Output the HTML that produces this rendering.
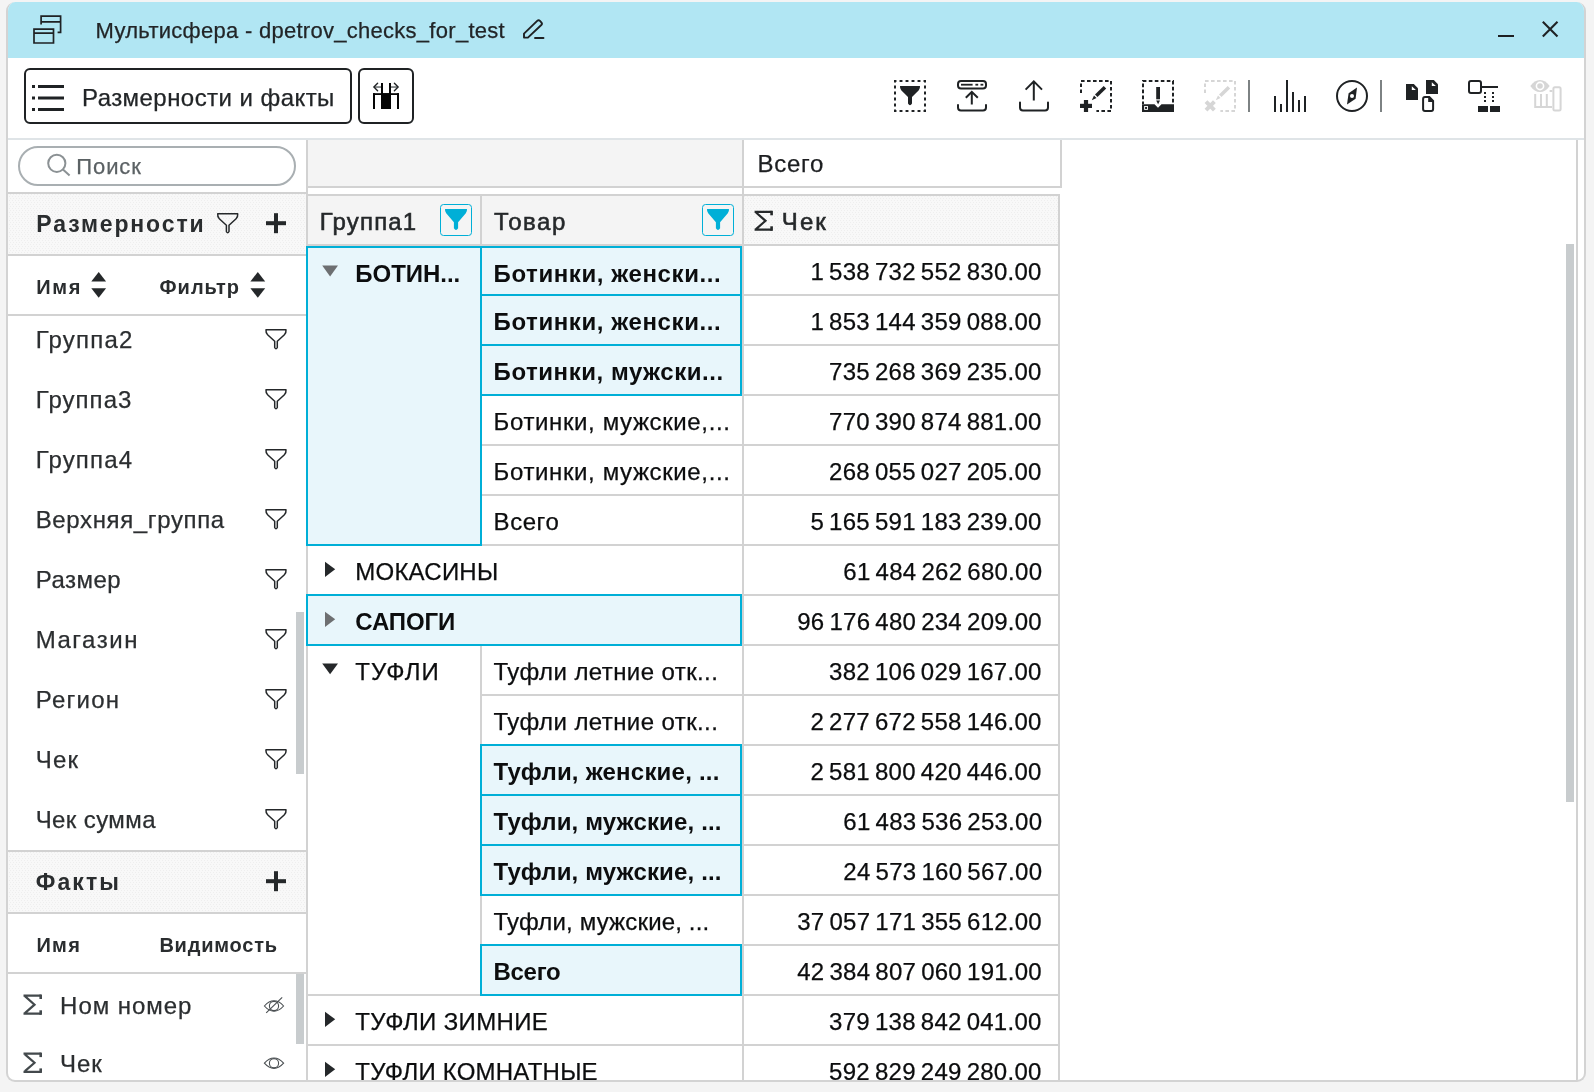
<!DOCTYPE html>
<html><head><meta charset="utf-8"><title>Мультисфера</title>
<style>
html,body{margin:0;padding:0;}
body{width:1594px;height:1092px;overflow:hidden;background:#f4f4f4;position:relative;font-family:"Liberation Sans", sans-serif;}
#win{position:absolute;left:6px;top:2px;width:1580px;height:1080px;box-sizing:border-box;border:2px solid #d3d3d3;border-top:0;border-radius:9px;background:#fff;overflow:hidden;}
#o{position:absolute;left:-8px;top:-2px;width:1594px;height:1092px;will-change:transform;}
#o div{position:absolute;}
#o span{position:absolute;white-space:pre;font-family:"Liberation Sans", sans-serif;}
#o svg{position:absolute;left:0;top:0;}
</style></head><body>
<div id="win"><div id="o">
<svg width="1594" height="1092" viewBox="0 0 1594 1092" shape-rendering="crispEdges">
<defs><pattern id="stp" width="3" height="4" patternUnits="userSpaceOnUse"><rect width="3" height="4" fill="#f8f8f8"/><rect x="0" y="0" width="1" height="1" fill="#eeeeee"/><rect x="1" y="2" width="1" height="1" fill="#eeeeee"/></pattern></defs>
<rect x="8" y="194" width="298" height="60" fill="url(#stp)"/>
<rect x="8" y="852" width="298" height="60" fill="url(#stp)"/>
<rect x="744" y="196" width="314" height="48" fill="url(#stp)"/>
</svg>
<div style="left:8px;top:2px;width:1576px;height:56px;background:#b1e6f3;"></div>
<div style="left:1498px;top:35px;width:16px;height:2px;background:#1d2022;"></div>
<div style="left:8px;top:138px;width:1576px;height:2px;background:#dfe4e7;"></div>
<div style="left:24px;top:68px;width:328px;height:56px;box-sizing:border-box;border:2px solid #1f2224;border-radius:6px;"></div>
<div style="left:358px;top:68px;width:56px;height:56px;box-sizing:border-box;border:2px solid #1f2224;border-radius:6px;"></div>
<div style="left:18px;top:146px;width:278px;height:40px;background:#fff;box-sizing:border-box;border:2px solid #a9afb2;border-radius:20px;"></div>
<div style="left:8px;top:192px;width:298px;height:2px;background:#d2d2d2;"></div>
<div style="left:8px;top:254px;width:298px;height:2px;background:#d2d2d2;"></div>
<div style="left:8px;top:314px;width:298px;height:2px;background:#d2d2d2;"></div>
<div style="left:8px;top:850px;width:298px;height:2px;background:#d2d2d2;"></div>
<div style="left:8px;top:912px;width:298px;height:2px;background:#d2d2d2;"></div>
<div style="left:8px;top:972px;width:298px;height:2px;background:#d2d2d2;"></div>
<div style="left:296px;top:612px;width:8px;height:162px;background:#c8ccce;"></div>
<div style="left:296px;top:974px;width:8px;height:70px;background:#c8ccce;"></div>
<div style="left:306px;top:140px;width:2px;height:940px;background:#d2d2d2;"></div>
<div style="left:308px;top:140px;width:434px;height:46px;background:#f4f4f4;"></div>
<div style="left:308px;top:186px;width:754px;height:2px;background:#d2d2d2;"></div>
<div style="left:742px;top:140px;width:2px;height:940px;background:#d2d2d2;"></div>
<div style="left:1060px;top:140px;width:2px;height:48px;background:#d2d2d2;"></div>
<div style="left:308px;top:196px;width:434px;height:48px;background:#f4f4f4;"></div>
<div style="left:308px;top:194px;width:752px;height:2px;background:#d2d2d2;"></div>
<div style="left:308px;top:244px;width:752px;height:2px;background:#d2d2d2;"></div>
<div style="left:480px;top:196px;width:2px;height:48px;background:#d2d2d2;"></div>
<div style="left:742px;top:140px;width:2px;height:940px;background:#d2d2d2;"></div>
<div style="left:1058px;top:196px;width:2px;height:884px;background:#d2d2d2;"></div>
<div style="left:440px;top:204px;width:32px;height:32px;box-sizing:border-box;border:1.5px solid #00afd7;border-radius:3.5px;"></div>
<div style="left:702px;top:204px;width:32px;height:32px;box-sizing:border-box;border:1.5px solid #00afd7;border-radius:3.5px;"></div>
<div style="left:482px;top:294px;width:576px;height:2px;background:#d2d2d2;"></div>
<div style="left:482px;top:344px;width:576px;height:2px;background:#d2d2d2;"></div>
<div style="left:482px;top:394px;width:576px;height:2px;background:#d2d2d2;"></div>
<div style="left:482px;top:444px;width:576px;height:2px;background:#d2d2d2;"></div>
<div style="left:482px;top:494px;width:576px;height:2px;background:#d2d2d2;"></div>
<div style="left:308px;top:544px;width:750px;height:2px;background:#d2d2d2;"></div>
<div style="left:308px;top:594px;width:750px;height:2px;background:#d2d2d2;"></div>
<div style="left:308px;top:644px;width:750px;height:2px;background:#d2d2d2;"></div>
<div style="left:482px;top:694px;width:576px;height:2px;background:#d2d2d2;"></div>
<div style="left:482px;top:744px;width:576px;height:2px;background:#d2d2d2;"></div>
<div style="left:482px;top:794px;width:576px;height:2px;background:#d2d2d2;"></div>
<div style="left:482px;top:844px;width:576px;height:2px;background:#d2d2d2;"></div>
<div style="left:482px;top:894px;width:576px;height:2px;background:#d2d2d2;"></div>
<div style="left:482px;top:944px;width:576px;height:2px;background:#d2d2d2;"></div>
<div style="left:308px;top:994px;width:750px;height:2px;background:#d2d2d2;"></div>
<div style="left:308px;top:1044px;width:750px;height:2px;background:#d2d2d2;"></div>
<div style="left:308px;top:1094px;width:750px;height:2px;background:#d2d2d2;"></div>
<div style="left:480px;top:246px;width:2px;height:300px;background:#d2d2d2;"></div>
<div style="left:480px;top:646px;width:2px;height:350px;background:#d2d2d2;"></div>
<div style="left:306px;top:246px;width:176px;height:300px;background:#e8f6fb;box-sizing:border-box;border:2px solid #00afd7;"></div>
<div style="left:480px;top:246px;width:262px;height:50px;background:#e8f6fb;box-sizing:border-box;border:2px solid #00afd7;"></div>
<div style="left:480px;top:294px;width:262px;height:52px;background:#e8f6fb;box-sizing:border-box;border:2px solid #00afd7;"></div>
<div style="left:480px;top:344px;width:262px;height:52px;background:#e8f6fb;box-sizing:border-box;border:2px solid #00afd7;"></div>
<div style="left:306px;top:594px;width:436px;height:52px;background:#e8f6fb;box-sizing:border-box;border:2px solid #00afd7;"></div>
<div style="left:480px;top:744px;width:262px;height:52px;background:#e8f6fb;box-sizing:border-box;border:2px solid #00afd7;"></div>
<div style="left:480px;top:794px;width:262px;height:52px;background:#e8f6fb;box-sizing:border-box;border:2px solid #00afd7;"></div>
<div style="left:480px;top:844px;width:262px;height:52px;background:#e8f6fb;box-sizing:border-box;border:2px solid #00afd7;"></div>
<div style="left:480px;top:944px;width:262px;height:52px;background:#e8f6fb;box-sizing:border-box;border:2px solid #00afd7;"></div>
<div style="left:1566px;top:244px;width:8px;height:558px;background:#c8ccce;"></div>
<div style="left:1576px;top:140px;width:2px;height:940px;background:#d2d2d2;"></div>
<span style="left:95.60px;top:20px;font-size:22px;line-height:22px;font-weight:400;color:#222527;letter-spacing:0.278px;-webkit-text-stroke:0.25px #222527;">Мультисфера - dpetrov_checks_for_test</span>
<span style="left:82.00px;top:86px;font-size:24px;line-height:24px;font-weight:400;color:#222527;letter-spacing:0.444px;-webkit-text-stroke:0.25px #222527;">Размерности и факты</span>
<span style="left:76.20px;top:156px;font-size:22px;line-height:22px;font-weight:400;color:#5b6164;letter-spacing:0.950px;-webkit-text-stroke:0.25px #5b6164;">Поиск</span>
<span style="left:36.30px;top:213px;font-size:23px;line-height:23px;font-weight:700;color:#2a2d2f;letter-spacing:1.870px;">Размерности</span>
<span style="left:36.30px;top:277px;font-size:20px;line-height:20px;font-weight:700;color:#2a2d2f;letter-spacing:1.600px;">Имя</span>
<span style="left:159.60px;top:277px;font-size:20px;line-height:20px;font-weight:700;color:#2a2d2f;letter-spacing:0.960px;">Фильтр</span>
<span style="left:35.70px;top:328px;font-size:24px;line-height:24px;font-weight:400;color:#2b2e30;letter-spacing:1.217px;-webkit-text-stroke:0.25px #2b2e30;">Группа2</span>
<span style="left:35.70px;top:388px;font-size:24px;line-height:24px;font-weight:400;color:#2b2e30;letter-spacing:1.050px;-webkit-text-stroke:0.25px #2b2e30;">Группа3</span>
<span style="left:35.70px;top:448px;font-size:24px;line-height:24px;font-weight:400;color:#2b2e30;letter-spacing:1.150px;-webkit-text-stroke:0.25px #2b2e30;">Группа4</span>
<span style="left:35.70px;top:508px;font-size:24px;line-height:24px;font-weight:400;color:#2b2e30;letter-spacing:0.638px;-webkit-text-stroke:0.25px #2b2e30;">Верхняя_группа</span>
<span style="left:35.70px;top:568px;font-size:24px;line-height:24px;font-weight:400;color:#2b2e30;letter-spacing:0.500px;-webkit-text-stroke:0.25px #2b2e30;">Размер</span>
<span style="left:35.70px;top:628px;font-size:24px;line-height:24px;font-weight:400;color:#2b2e30;letter-spacing:1.533px;-webkit-text-stroke:0.25px #2b2e30;">Магазин</span>
<span style="left:35.70px;top:688px;font-size:24px;line-height:24px;font-weight:400;color:#2b2e30;letter-spacing:1.260px;-webkit-text-stroke:0.25px #2b2e30;">Регион</span>
<span style="left:35.70px;top:748px;font-size:24px;line-height:24px;font-weight:400;color:#2b2e30;letter-spacing:1.250px;-webkit-text-stroke:0.25px #2b2e30;">Чек</span>
<span style="left:35.70px;top:808px;font-size:24px;line-height:24px;font-weight:400;color:#2b2e30;letter-spacing:0.400px;-webkit-text-stroke:0.25px #2b2e30;">Чек сумма</span>
<span style="left:35.80px;top:871px;font-size:23px;line-height:23px;font-weight:700;color:#2a2d2f;letter-spacing:2.050px;">Факты</span>
<span style="left:36.40px;top:935px;font-size:20px;line-height:20px;font-weight:700;color:#2a2d2f;letter-spacing:1.350px;">Имя</span>
<span style="left:159.40px;top:935px;font-size:20px;line-height:20px;font-weight:700;color:#2a2d2f;letter-spacing:0.787px;">Видимость</span>
<span style="left:60.10px;top:994px;font-size:24px;line-height:24px;font-weight:400;color:#2b2e30;letter-spacing:0.950px;-webkit-text-stroke:0.25px #2b2e30;">Ном номер</span>
<span style="left:59.90px;top:1052px;font-size:24px;line-height:24px;font-weight:400;color:#2b2e30;letter-spacing:1.000px;-webkit-text-stroke:0.25px #2b2e30;">Чек</span>
<span style="left:757.60px;top:152px;font-size:24px;line-height:24px;font-weight:400;color:#1c1e20;letter-spacing:0.675px;-webkit-text-stroke:0.25px #1c1e20;">Всего</span>
<span style="left:319.70px;top:210px;font-size:24px;line-height:24px;font-weight:400;color:#25282a;letter-spacing:1.183px;-webkit-text-stroke:0.55px #25282a;">Группа1</span>
<span style="left:493.90px;top:210px;font-size:24px;line-height:24px;font-weight:400;color:#25282a;letter-spacing:1.525px;-webkit-text-stroke:0.55px #25282a;">Товар</span>
<span style="left:781.80px;top:210px;font-size:24px;line-height:24px;font-weight:400;color:#25282a;letter-spacing:2.100px;-webkit-text-stroke:0.55px #25282a;">Чек</span>
<span style="left:355.30px;top:262px;font-size:24px;line-height:24px;font-weight:700;color:#0c0d0e;letter-spacing:-0.029px;">БОТИН...</span>
<span style="left:493.60px;top:262px;font-size:24px;line-height:24px;font-weight:700;color:#0c0d0e;letter-spacing:0.588px;">Ботинки, женски...</span>
<span style="left:493.60px;top:310px;font-size:24px;line-height:24px;font-weight:700;color:#0c0d0e;letter-spacing:0.588px;">Ботинки, женски...</span>
<span style="left:493.60px;top:360px;font-size:24px;line-height:24px;font-weight:700;color:#0c0d0e;letter-spacing:0.547px;">Ботинки, мужски...</span>
<span style="left:493.60px;top:410px;font-size:24px;line-height:24px;font-weight:400;color:#0c0d0e;letter-spacing:0.621px;-webkit-text-stroke:0.25px #0c0d0e;">Ботинки, мужские,...</span>
<span style="left:493.60px;top:460px;font-size:24px;line-height:24px;font-weight:400;color:#0c0d0e;letter-spacing:0.621px;-webkit-text-stroke:0.25px #0c0d0e;">Ботинки, мужские,...</span>
<span style="left:493.60px;top:510px;font-size:24px;line-height:24px;font-weight:400;color:#0c0d0e;letter-spacing:0.550px;-webkit-text-stroke:0.25px #0c0d0e;">Всего</span>
<span style="left:355.30px;top:560px;font-size:24px;line-height:24px;font-weight:400;color:#0c0d0e;letter-spacing:0.229px;-webkit-text-stroke:0.25px #0c0d0e;">МОКАСИНЫ</span>
<span style="left:355.30px;top:610px;font-size:24px;line-height:24px;font-weight:700;color:#0c0d0e;letter-spacing:-0.100px;">САПОГИ</span>
<span style="left:355.30px;top:660px;font-size:24px;line-height:24px;font-weight:400;color:#0c0d0e;letter-spacing:0.950px;-webkit-text-stroke:0.25px #0c0d0e;">ТУФЛИ</span>
<span style="left:493.60px;top:660px;font-size:24px;line-height:24px;font-weight:400;color:#0c0d0e;letter-spacing:0.411px;-webkit-text-stroke:0.25px #0c0d0e;">Туфли летние отк...</span>
<span style="left:493.60px;top:710px;font-size:24px;line-height:24px;font-weight:400;color:#0c0d0e;letter-spacing:0.411px;-webkit-text-stroke:0.25px #0c0d0e;">Туфли летние отк...</span>
<span style="left:493.60px;top:760px;font-size:24px;line-height:24px;font-weight:700;color:#0c0d0e;letter-spacing:0.217px;">Туфли, женские, ...</span>
<span style="left:493.60px;top:810px;font-size:24px;line-height:24px;font-weight:700;color:#0c0d0e;letter-spacing:0.156px;">Туфли, мужские, ...</span>
<span style="left:493.60px;top:860px;font-size:24px;line-height:24px;font-weight:700;color:#0c0d0e;letter-spacing:0.156px;">Туфли, мужские, ...</span>
<span style="left:493.60px;top:910px;font-size:24px;line-height:24px;font-weight:400;color:#0c0d0e;letter-spacing:0.161px;-webkit-text-stroke:0.25px #0c0d0e;">Туфли, мужские, ...</span>
<span style="left:493.60px;top:960px;font-size:24px;line-height:24px;font-weight:700;color:#0c0d0e;letter-spacing:-0.325px;">Всего</span>
<span style="left:355.30px;top:1010px;font-size:24px;line-height:24px;font-weight:400;color:#0c0d0e;letter-spacing:0.364px;-webkit-text-stroke:0.25px #0c0d0e;">ТУФЛИ ЗИМНИЕ</span>
<span style="left:355.30px;top:1060px;font-size:24px;line-height:24px;font-weight:400;color:#0c0d0e;letter-spacing:0.214px;-webkit-text-stroke:0.25px #0c0d0e;">ТУФЛИ КОМНАТНЫЕ</span>
<span style="left:810.45px;top:260px;font-size:24px;line-height:24px;font-weight:400;color:#0c0d0e;letter-spacing:0.250px;word-spacing:-1.85px;-webkit-text-stroke:0.25px #0c0d0e;">1 538 732 552 830.00</span>
<span style="left:810.45px;top:310px;font-size:24px;line-height:24px;font-weight:400;color:#0c0d0e;letter-spacing:0.250px;word-spacing:-1.85px;-webkit-text-stroke:0.25px #0c0d0e;">1 853 144 359 088.00</span>
<span style="left:829.10px;top:360px;font-size:24px;line-height:24px;font-weight:400;color:#0c0d0e;letter-spacing:0.250px;word-spacing:-1.85px;-webkit-text-stroke:0.25px #0c0d0e;">735 268 369 235.00</span>
<span style="left:829.10px;top:410px;font-size:24px;line-height:24px;font-weight:400;color:#0c0d0e;letter-spacing:0.250px;word-spacing:-1.85px;-webkit-text-stroke:0.25px #0c0d0e;">770 390 874 881.00</span>
<span style="left:829.10px;top:460px;font-size:24px;line-height:24px;font-weight:400;color:#0c0d0e;letter-spacing:0.250px;word-spacing:-1.85px;-webkit-text-stroke:0.25px #0c0d0e;">268 055 027 205.00</span>
<span style="left:810.45px;top:510px;font-size:24px;line-height:24px;font-weight:400;color:#0c0d0e;letter-spacing:0.250px;word-spacing:-1.85px;-webkit-text-stroke:0.25px #0c0d0e;">5 165 591 183 239.00</span>
<span style="left:843.35px;top:560px;font-size:24px;line-height:24px;font-weight:400;color:#0c0d0e;letter-spacing:0.250px;word-spacing:-1.85px;-webkit-text-stroke:0.25px #0c0d0e;">61 484 262 680.00</span>
<span style="left:797.20px;top:610px;font-size:24px;line-height:24px;font-weight:400;color:#0c0d0e;letter-spacing:0.250px;word-spacing:-1.85px;-webkit-text-stroke:0.25px #0c0d0e;">96 176 480 234 209.00</span>
<span style="left:829.10px;top:660px;font-size:24px;line-height:24px;font-weight:400;color:#0c0d0e;letter-spacing:0.250px;word-spacing:-1.85px;-webkit-text-stroke:0.25px #0c0d0e;">382 106 029 167.00</span>
<span style="left:810.45px;top:710px;font-size:24px;line-height:24px;font-weight:400;color:#0c0d0e;letter-spacing:0.250px;word-spacing:-1.85px;-webkit-text-stroke:0.25px #0c0d0e;">2 277 672 558 146.00</span>
<span style="left:810.45px;top:760px;font-size:24px;line-height:24px;font-weight:400;color:#0c0d0e;letter-spacing:0.250px;word-spacing:-1.85px;-webkit-text-stroke:0.25px #0c0d0e;">2 581 800 420 446.00</span>
<span style="left:843.35px;top:810px;font-size:24px;line-height:24px;font-weight:400;color:#0c0d0e;letter-spacing:0.250px;word-spacing:-1.85px;-webkit-text-stroke:0.25px #0c0d0e;">61 483 536 253.00</span>
<span style="left:843.35px;top:860px;font-size:24px;line-height:24px;font-weight:400;color:#0c0d0e;letter-spacing:0.250px;word-spacing:-1.85px;-webkit-text-stroke:0.25px #0c0d0e;">24 573 160 567.00</span>
<span style="left:797.20px;top:910px;font-size:24px;line-height:24px;font-weight:400;color:#0c0d0e;letter-spacing:0.250px;word-spacing:-1.85px;-webkit-text-stroke:0.25px #0c0d0e;">37 057 171 355 612.00</span>
<span style="left:797.20px;top:960px;font-size:24px;line-height:24px;font-weight:400;color:#0c0d0e;letter-spacing:0.250px;word-spacing:-1.85px;-webkit-text-stroke:0.25px #0c0d0e;">42 384 807 060 191.00</span>
<span style="left:829.10px;top:1010px;font-size:24px;line-height:24px;font-weight:400;color:#0c0d0e;letter-spacing:0.250px;word-spacing:-1.85px;-webkit-text-stroke:0.25px #0c0d0e;">379 138 842 041.00</span>
<span style="left:829.10px;top:1060px;font-size:24px;line-height:24px;font-weight:400;color:#0c0d0e;letter-spacing:0.250px;word-spacing:-1.85px;-webkit-text-stroke:0.25px #0c0d0e;">592 829 249 280.00</span>
<svg width="1594" height="1092" viewBox="0 0 1594 1092">
<path d="M41.1,24.5 V16.2 H60.6 V32.4 H57.6 M41.1,21.9 H60.6" stroke="#1f2224" stroke-width="1.7" fill="none" />
<path d="M34,29.2 H53.5 V43 H34 Z M34,33.2 H53.5" stroke="#1f2224" stroke-width="1.7" fill="none" />
<path d="M524,37.6 L524,33.6 L537.2,20.9 Q538.6,19.6 540,20.9 L541.3,22.3 Q542.6,23.7 541.3,25 L527.9,37.6 Z" stroke="#1f2224" stroke-width="1.9" fill="none" stroke-linejoin="round"/>
<path d="M535,38 H543.5" stroke="#1f2224" stroke-width="1.9" fill="none" stroke-linecap="round"/>
<path d="M1542.8,21.8 L1557.5,36.5 M1557.5,21.8 L1542.8,36.5" stroke="#1f2224" stroke-width="2.1" fill="none" />
<rect x="32" y="85.0" width="3" height="3.0" fill="#1f2224"/>
<rect x="38" y="85.0" width="26" height="3.0" fill="#1f2224"/>
<rect x="32" y="96.5" width="3" height="3.0" fill="#1f2224"/>
<rect x="38" y="96.5" width="26" height="3.0" fill="#1f2224"/>
<rect x="32" y="108.0" width="3" height="3.0" fill="#1f2224"/>
<rect x="38" y="108.0" width="26" height="3.0" fill="#1f2224"/>
<circle cx="56.8" cy="163.3" r="8.6" stroke="#8b9194" stroke-width="2" fill="none"/>
<path d="M63,169.6 L69.6,175.6" stroke="#8b9194" stroke-width="2" fill="none" />
<rect x="381" y="83" width="2" height="26" fill="#050505"/>
<rect x="389" y="83" width="2" height="26" fill="#050505"/>
<rect x="381" y="93.2" width="10" height="15.799999999999997" fill="#050505"/>
<rect x="373" y="93.2" width="26" height="1.7999999999999972" fill="#050505"/>
<rect x="373" y="93.2" width="2" height="15.799999999999997" fill="#050505"/>
<rect x="397" y="93.2" width="2" height="15.799999999999997" fill="#050505"/>
<rect x="375" y="86.2" width="6" height="1.7000000000000028" fill="#7b7f80"/>
<rect x="391" y="86.2" width="6" height="1.7000000000000028" fill="#7b7f80"/>
<path d="M377.6,83.3 L373.9,87 L377.6,90.7" stroke="#1f2224" stroke-width="1.4" fill="none" stroke-linecap="round"/>
<path d="M394.4,83.3 L398.1,87 L394.4,90.7" stroke="#1f2224" stroke-width="1.4" fill="none" stroke-linecap="round"/>
<rect x="895" y="81" width="30" height="30" fill="none" stroke="#1f2224" stroke-width="2" stroke-dasharray="2.9 3.1" stroke-dashoffset="1.45"/>
<path d="M900.0,86 H920.0 Q920.2,88.8 918.8,90.2 L912.0,96.92 V103.5 Q910,107.1 908.0,103.5 V96.92 L901.2,90.2 Q899.8,88.8 900.0,86 Z" fill="#1f2224" />
<rect x="958" y="81" width="28" height="7.6" rx="3" fill="none" stroke="#1f2224" stroke-width="2"/>
<rect x="961" y="83.8" width="11.600000000000023" height="1.7999999999999972" fill="#1f2224"/>
<rect x="975.4" y="83.8" width="2.800000000000068" height="1.7999999999999972" fill="#1f2224"/>
<rect x="980.5" y="83.8" width="2.7999999999999545" height="1.7999999999999972" fill="#1f2224"/>
<path d="M971.8,104.4 V92 M965.8,97.8 L971.8,91.8 L977.8,97.8" stroke="#1f2224" stroke-width="2" fill="none" />
<path d="M958,105 V107.5 Q958,110.5 961,110.5 H983 Q986,110.5 986,107.5 V105" stroke="#1f2224" stroke-width="2" fill="none" stroke-linecap="round"/>
<path d="M1033.8,100.4 V81.5 M1025.6,89.6 L1033.8,81.4 L1042,89.6" stroke="#1f2224" stroke-width="2" fill="none" />
<path d="M1020,102.5 V107.5 Q1020,110.5 1023,110.5 H1045 Q1048,110.5 1048,107.5 V102.5" stroke="#1f2224" stroke-width="2" fill="none" stroke-linecap="round"/>
<path d="M1081,93.6 V81 H1111 V111 H1096.4" fill="none" stroke="#1f2224" stroke-width="2" stroke-dasharray="3.6 2.4" stroke-dashoffset="-0.6"/>
<path d="M1103.7,85.9 L1106.2,88.4 L1097.5,97.1 L1095.0,94.6 Z" fill="#1f2224" />
<path d="M1094.0,95.6 L1096.5,98.1 L1091.8,100.2 Z" fill="#1f2224" />
<rect x="1080" y="103.8" width="12" height="4.200000000000003" fill="#1f2224"/>
<rect x="1083.9" y="100" width="4.199999999999818" height="12" fill="#1f2224"/>
<path d="M1143,104 V81 H1173 V104" fill="none" stroke="#1f2224" stroke-width="2" stroke-dasharray="3.6 2.4" stroke-dashoffset="1.2"/>
<path d="M1142,104.3 H1154.5 L1158,107.8 L1161.5,104.3 H1174 V112 H1142 Z" fill="#1f2224" />
<rect x="1144.6" y="106.5" width="2.9" height="2.9" fill="none" stroke="#fff" stroke-width="0.9"/>
<rect x="1156.2" y="87" width="3.7999999999999545" height="12.299999999999997" fill="#1f2224"/>
<path d="M1156.2,100.6 H1160 L1158.1,104.2 Z" fill="#1f2224" />
<path d="M1205,93.6 V81 H1235 V111 H1220.4" fill="none" stroke="#d6d6d6" stroke-width="2" stroke-dasharray="3.6 2.4" stroke-dashoffset="-0.6"/>
<path d="M1227.7,85.9 L1230.2,88.4 L1221.5,97.1 L1219.0,94.6 Z" fill="#d6d6d6" />
<path d="M1218.0,95.6 L1220.5,98.1 L1215.8,100.2 Z" fill="#d6d6d6" />
<path d="M1206,101.7 L1214.4,110.1 M1214.4,101.7 L1206,110.1" stroke="#d6d6d6" stroke-width="4" fill="none" />
<rect x="1248" y="80" width="2" height="32" fill="#7d8283"/>
<rect x="1380" y="80" width="2" height="32" fill="#7d8283"/>
<rect x="1274" y="96" width="2" height="16" fill="#1f2224"/>
<rect x="1280" y="104" width="2" height="8" fill="#1f2224"/>
<rect x="1286" y="80" width="2" height="32" fill="#1f2224"/>
<rect x="1292" y="92" width="2" height="20" fill="#1f2224"/>
<rect x="1298" y="100" width="2" height="12" fill="#1f2224"/>
<rect x="1304" y="96" width="2" height="16" fill="#1f2224"/>
<circle cx="1352" cy="96" r="15" fill="none" stroke="#1f2224" stroke-width="2"/>
<path d="M1357,87.4 L1355.6,98.8 L1347,104.6 L1348.6,93.2 Z" fill="#1f2224" />
<circle cx="1352" cy="96" r="2" fill="#fff"/>
<path d="M1406,84 H1413.8 L1418,88.2 V100 H1406 Z" fill="#1f2224" />
<path d="M1411.8,86.2 V90.10000000000001 H1415.9 Z" fill="#fff" />
<path d="M1426,80 H1433.8 L1438,84.2 V94 H1426 Z" fill="#1f2224" />
<path d="M1431.8,82.2 V86.10000000000001 H1435.9 Z" fill="#fff" />
<path d="M1423.1,99 Q1423.1,97.1 1425,97.1 H1429.3 L1433.1,100.9 V109 Q1433.1,110.9 1431.2,110.9 H1425 Q1423.1,110.9 1423.1,109 Z" stroke="#1f2224" stroke-width="2" fill="none" />
<path d="M1428.2,96.5 V102 H1433.6 Z" fill="#1f2224" />
<rect x="1469" y="81" width="12" height="12" rx="2" fill="none" stroke="#1f2224" stroke-width="2"/>
<rect x="1482" y="86" width="16" height="2" fill="#1f2224"/>
<rect x="1484" y="92" width="2" height="2" fill="#1f2224"/>
<rect x="1484" y="96" width="2" height="2" fill="#1f2224"/>
<rect x="1484" y="100" width="2" height="2" fill="#1f2224"/>
<rect x="1492" y="92" width="2" height="2" fill="#1f2224"/>
<rect x="1492" y="96" width="2" height="2" fill="#1f2224"/>
<rect x="1492" y="100" width="2" height="2" fill="#1f2224"/>
<rect x="1478" y="106" width="10" height="6" fill="#1f2224"/>
<rect x="1490" y="106" width="10" height="6" fill="#1f2224"/>
<path d="M1530.3,86 Q1534.5,80 1540,80 Q1545.5,80 1549.7,86 Q1545.5,92 1540,92 Q1534.5,92 1530.3,86 Z" fill="#d6d6d6" />
<circle cx="1540" cy="86" r="3.6" fill="none" stroke="#fff" stroke-width="1.6"/>
<path d="M1535.2,94 V107 H1552 M1541,94 V107 M1546.8,94 V107" stroke="#d6d6d6" stroke-width="2" fill="none" />
<rect x="1553.4" y="87.3" width="7.2" height="23.2" rx="1.5" fill="#fff" stroke="#d6d6d6" stroke-width="2"/>
<rect x="1549.6" y="90" width="2.800000000000182" height="2" fill="#d6d6d6"/>
<path d="M322.2,265.59999999999997 H338 L330.1,276.4 Z" fill="#6d6f71" />
<path d="M325,561.6999999999999 L335.2,569.3 L325,576.9 Z" fill="#25282a" />
<path d="M325,611.6999999999999 L335.2,619.3 L325,626.9 Z" fill="#6d6f71" />
<path d="M322.2,663.4 H338 L330.1,674.1999999999999 Z" fill="#25282a" />
<path d="M325,1011.6999999999999 L335.2,1019.3 L325,1026.8999999999999 Z" fill="#25282a" />
<path d="M325,1061.7 L335.2,1069.3 L325,1076.8999999999999 Z" fill="#25282a" />
<path d="M217.7,213.79999999999998 H237.7 Q238.0,216.99999999999997 236.1,218.79999999999998 L229.0,225.29999999999998 V231.5 Q227.7,234.1 226.39999999999998,231.5 V225.29999999999998 L219.29999999999998,218.79999999999998 Q217.39999999999998,216.99999999999997 217.7,213.79999999999998 Z" stroke="#25282a" stroke-width="1.5" fill="none" stroke-linejoin="round"/>
<path d="M266,329.8 H286 Q286.3,333.0 284.4,334.8 L277.3,341.3 V347.5 Q276,350.1 274.7,347.5 V341.3 L267.6,334.8 Q265.7,333.0 266,329.8 Z" stroke="#25282a" stroke-width="1.5" fill="none" stroke-linejoin="round"/>
<path d="M266,389.8 H286 Q286.3,393.0 284.4,394.8 L277.3,401.3 V407.5 Q276,410.1 274.7,407.5 V401.3 L267.6,394.8 Q265.7,393.0 266,389.8 Z" stroke="#25282a" stroke-width="1.5" fill="none" stroke-linejoin="round"/>
<path d="M266,449.8 H286 Q286.3,453.0 284.4,454.8 L277.3,461.3 V467.5 Q276,470.1 274.7,467.5 V461.3 L267.6,454.8 Q265.7,453.0 266,449.8 Z" stroke="#25282a" stroke-width="1.5" fill="none" stroke-linejoin="round"/>
<path d="M266,509.8 H286 Q286.3,513.0 284.4,514.8 L277.3,521.3 V527.5 Q276,530.1 274.7,527.5 V521.3 L267.6,514.8 Q265.7,513.0 266,509.8 Z" stroke="#25282a" stroke-width="1.5" fill="none" stroke-linejoin="round"/>
<path d="M266,569.8000000000001 H286 Q286.3,573.0000000000001 284.4,574.8000000000001 L277.3,581.3000000000001 V587.5 Q276,590.1 274.7,587.5 V581.3000000000001 L267.6,574.8000000000001 Q265.7,573.0000000000001 266,569.8000000000001 Z" stroke="#25282a" stroke-width="1.5" fill="none" stroke-linejoin="round"/>
<path d="M266,629.8000000000001 H286 Q286.3,633.0000000000001 284.4,634.8000000000001 L277.3,641.3000000000001 V647.5 Q276,650.1 274.7,647.5 V641.3000000000001 L267.6,634.8000000000001 Q265.7,633.0000000000001 266,629.8000000000001 Z" stroke="#25282a" stroke-width="1.5" fill="none" stroke-linejoin="round"/>
<path d="M266,689.8000000000001 H286 Q286.3,693.0000000000001 284.4,694.8000000000001 L277.3,701.3000000000001 V707.5 Q276,710.1 274.7,707.5 V701.3000000000001 L267.6,694.8000000000001 Q265.7,693.0000000000001 266,689.8000000000001 Z" stroke="#25282a" stroke-width="1.5" fill="none" stroke-linejoin="round"/>
<path d="M266,749.8000000000001 H286 Q286.3,753.0000000000001 284.4,754.8000000000001 L277.3,761.3000000000001 V767.5 Q276,770.1 274.7,767.5 V761.3000000000001 L267.6,754.8000000000001 Q265.7,753.0000000000001 266,749.8000000000001 Z" stroke="#25282a" stroke-width="1.5" fill="none" stroke-linejoin="round"/>
<path d="M266,809.8000000000001 H286 Q286.3,813.0000000000001 284.4,814.8000000000001 L277.3,821.3000000000001 V827.5 Q276,830.1 274.7,827.5 V821.3000000000001 L267.6,814.8000000000001 Q265.7,813.0000000000001 266,809.8000000000001 Z" stroke="#25282a" stroke-width="1.5" fill="none" stroke-linejoin="round"/>
<rect x="266" y="221.2" width="20" height="4.0" fill="#25282a"/>
<rect x="274" y="213.2" width="4" height="20.0" fill="#25282a"/>
<rect x="266" y="879.2" width="20" height="4.0" fill="#25282a"/>
<rect x="274" y="871.2" width="4" height="20.0" fill="#25282a"/>
<path d="M98.7,272 L106.10000000000001,281.6 H91.3 Z" fill="#25282a" />
<path d="M98.7,297.8 L106.10000000000001,288.2 H91.3 Z" fill="#25282a" />
<path d="M257.8,272 L265.2,281.6 H250.4 Z" fill="#25282a" />
<path d="M257.8,297.8 L265.2,288.2 H250.4 Z" fill="#25282a" />
<path d="M754.6,211.9 H771.8 M754.6,229.70000000000002 H771.8 M756.0,212.5 L765.5,220.8 L756.0,229.10000000000002" stroke="#25282a" stroke-width="2.2" fill="none" stroke-linejoin="miter"/>
<rect x="770.3" y="210.8" width="2.6000000000000227" height="4.5" fill="#25282a"/>
<rect x="770.3" y="226.3" width="2.6000000000000227" height="4.5" fill="#25282a"/>
<path d="M23.5,995.6 H40.9 M23.5,1013.6999999999999 H40.9 M24.900000000000002,996.2 L34.519999999999996,1004.65 L24.900000000000002,1013.0999999999999" stroke="#43494c" stroke-width="2.2" fill="none" stroke-linejoin="miter"/>
<rect x="39.4" y="994.5" width="2.6000000000000014" height="4.5" fill="#43494c"/>
<rect x="39.4" y="1010.3" width="2.6000000000000014" height="4.5" fill="#43494c"/>
<path d="M23.5,1053.6999999999998 H40.9 M23.5,1071.8 H40.9 M24.900000000000002,1054.2999999999997 L34.519999999999996,1062.75 L24.900000000000002,1071.2" stroke="#43494c" stroke-width="2.2" fill="none" stroke-linejoin="miter"/>
<rect x="39.4" y="1052.6" width="2.6000000000000014" height="4.5" fill="#43494c"/>
<rect x="39.4" y="1068.3999999999999" width="2.6000000000000014" height="4.5" fill="#43494c"/>
<path d="M264.4,1006 Q269,1000.8 274,1000.8 Q279,1000.8 283.6,1006 Q279,1011.2 274,1011.2 Q269,1011.2 264.4,1006 Z" stroke="#4a4f52" stroke-width="1.1" fill="none" />
<circle cx="274" cy="1006" r="4.6" fill="none" stroke="#4a4f52" stroke-width="1.1"/>
<path d="M266.2,1012.9 L282.2,997.3" stroke="#4a4f52" stroke-width="1.1" fill="none" />
<path d="M264.4,1063.2 Q269,1058.0 274,1058.0 Q279,1058.0 283.6,1063.2 Q279,1068.4 274,1068.4 Q269,1068.4 264.4,1063.2 Z" stroke="#4a4f52" stroke-width="1.1" fill="none" />
<circle cx="274" cy="1063.2" r="4.6" fill="none" stroke="#4a4f52" stroke-width="1.1"/>
<path d="M445.0,209 H467.0 Q467.2,211.8 465.8,213.2 L458.1,222.206 V228.3 Q456,231.9 453.9,228.3 V222.206 L446.2,213.2 Q444.8,211.8 445.0,209 Z" fill="#00afd7" />
<path d="M707.0,209 H729.0 Q729.2,211.8 727.8,213.2 L720.1,222.206 V228.3 Q718,231.9 715.9,228.3 V222.206 L708.2,213.2 Q706.8,211.8 707.0,209 Z" fill="#00afd7" />
</svg>
</div></div>
</body></html>
